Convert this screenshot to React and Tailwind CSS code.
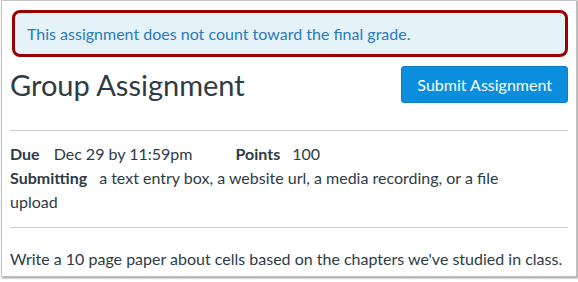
export default function App() {
  return (
    <div className="w-[578px] h-[282px] bg-white" style={{ fontFamily: "Lato, 'Liberation Sans', sans-serif" }}>
      <div className="ml-[1px] w-[576px] h-[277px] bg-white border border-[#c4c4c4] shadow-[1px_1px_2px_rgba(0,0,0,0.45)] px-[8px] text-[#2d3b45]">
        <div className="mt-[9px] ml-[2px] h-[47px] flex items-center rounded-[8px] border-[3px] border-[#990000] bg-[#e5f2f8] px-[12px]">
          <span className="text-[16px] text-[#2b7abc]">This assignment does not count toward the final grade.</span>
        </div>

        <div className="mt-[9px] flex items-center justify-between">
          <h1 className="text-[29px] leading-[34px] font-normal text-[#2d3b45]">Group Assignment</h1>
          <button className="h-[37px] px-[15px] rounded-[3px] bg-[#0b8edd] border border-[#0a7fc6] text-white text-[16px]">
            Submit Assignment
          </button>
        </div>

        <div className="mt-[27px] h-px bg-[#c7cdd1]" />

        <div className="mt-[11px] text-[16px] leading-[24px]">
          <div className="flex">
            <span className="font-bold">Due</span>
            <span className="ml-[14px]">Dec 29 by 11:59pm</span>
            <span className="ml-[43px] font-bold">Points</span>
            <span className="ml-[12px]">100</span>
          </div>
          <p>
            <span className="font-bold">Submitting</span>
            <span className="ml-[12px]">a text entry box, a website url, a media recording, or a file</span>
            <br />
            upload
          </p>
        </div>

        <div className="mt-[13px] h-px bg-[#c7cdd1]" />

        <p className="mt-[19px] text-[16px] leading-[24px]">
          Write a 10 page paper about cells based on the chapters we've studied in class.
        </p>
      </div>
    </div>
  );
}
